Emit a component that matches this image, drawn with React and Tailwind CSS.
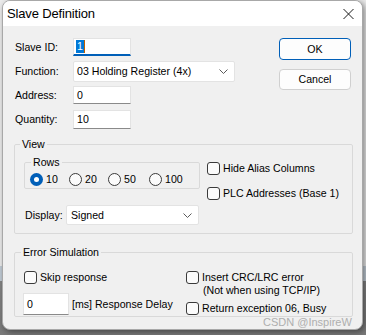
import React from "react";

// Small Win11-style controls
const Check = () => (
  <span className="w-[13px] h-[13px] shrink-0 rounded-[3px] border border-[#3a3a3a] bg-[#fbfbfb]" />
);

const Radio = ({ checked }) =>
  checked ? (
    <span className="w-[13px] h-[13px] shrink-0 rounded-full bg-[#005fb8] flex items-center justify-center">
      <span className="w-[5px] h-[5px] rounded-full bg-white" />
    </span>
  ) : (
    <span className="w-[13px] h-[13px] shrink-0 rounded-full border border-[#3a3a3a] bg-[#fbfbfb]" />
  );

const Chevron = () => (
  <svg width="9" height="5" viewBox="0 0 9 5" className="shrink-0">
    <path d="M0.5 0.5 L4.5 4.5 L8.5 0.5" fill="none" stroke="#5a5a5a" strokeWidth="1" />
  </svg>
);

const TextBox = ({ value, w = "w-[58px]", h = "h-[18px]" }) => (
  <div
    className={`${w} ${h} bg-white border border-[#e3e3e3] border-b-[#8a8a8a] flex items-center pl-[3px]`}
  >
    {value}
  </div>
);

const App = () => {
  return (
    <div className="w-[366px] h-[335px] overflow-hidden relative bg-[linear-gradient(to_bottom,#ececec_0px,#ececec_266px,#c2ccd6_266px,#c2ccd6_281px,#858585_281px,#7a7a7a_335px)] font-['Liberation_Sans',Arial,sans-serif] text-[10.6px] text-black leading-[13px]">
      {/* dialog window */}
      <div className="ml-[2px] w-[361px] h-[330px] rounded-[8px] border border-[#a8a8a8] bg-[#f0f0f0] overflow-hidden shadow-[2px_2px_6px_rgba(0,0,0,0.45)]">
        {/* title bar */}
        <div className="h-[25px] bg-white flex items-center justify-between pl-[4px] pr-[8px]">
          <span className="text-[13px] leading-[16px] tracking-[-0.15px]">Slave Definition</span>
          <svg width="11" height="10" viewBox="0 0 11 10">
            <path d="M0.5 0 L10.5 10 M10.5 0 L0.5 10" stroke="#1a1a1a" strokeWidth="1" />
          </svg>
        </div>

        {/* top fields + buttons */}
        <div className="flex mt-[12px]">
          <div className="flex flex-col pl-[12px]">
            <div className="flex items-center h-[18px]">
              <span className="w-[58px]">Slave ID:</span>
              <div className="w-[58px] h-[18px] bg-white border border-[#e3e3e3] border-b-2 border-b-[#005fb8] flex items-center pl-[2px]">
                <span className="bg-[#0078d7] text-white px-[1px] leading-[13px] border-r border-r-[#c06000]">1</span>
              </div>
            </div>
            <div className="flex items-center h-[21px] mt-[5px]">
              <span className="w-[58px]">Function:</span>
              <div className="w-[162px] h-[21px] bg-white border border-[#e3e3e3] rounded-[2px] flex items-center justify-between pl-[3px] pr-[6px]">
                <span>03 Holding Register (4x)</span>
                <Chevron />
              </div>
            </div>
            <div className="flex items-center h-[18px] mt-[4px]">
              <span className="w-[58px]">Address:</span>
              <TextBox value="0" />
            </div>
            <div className="flex items-center h-[19px] mt-[6px]">
              <span className="w-[58px]">Quantity:</span>
              <TextBox value="10" h="h-[19px]" />
            </div>
          </div>

          <div className="ml-auto mr-[11px] flex flex-col gap-[9px]">
            <button className="w-[72px] h-[22px] rounded-[4px] bg-[#fdfdfd] border-[1.5px] border-[#005fb8] flex items-center justify-center">
              OK
            </button>
            <button className="w-[72px] h-[21px] rounded-[4px] bg-[#fdfdfd] border border-[#d0d0d0] flex items-center justify-center">
              Cancel
            </button>
          </div>
        </div>

        {/* View group */}
        <fieldset className="ml-[11px] w-[339px] mt-[8px] border border-[#d9d9d9] rounded-[2px]">
          <legend className="ml-[5px] px-[2px] leading-[14px]">View</legend>
          <div className="flex">
            <div className="flex flex-col">
              <fieldset className="ml-[9px] w-[176px] mt-[4px] border border-[#d9d9d9] rounded-[2px]">
                <legend className="ml-[6px] px-[2px] leading-[14px]">Rows</legend>
                <div className="flex items-center h-[13px] mt-[4px] mb-[2px] pl-[5px]">
                  <div className="flex items-center gap-[3px] w-[39px]">
                    <Radio checked />
                    <span>10</span>
                  </div>
                  <div className="flex items-center gap-[3px] w-[39px]">
                    <Radio />
                    <span>20</span>
                  </div>
                  <div className="flex items-center gap-[3px] w-[41px]">
                    <Radio />
                    <span>50</span>
                  </div>
                  <div className="flex items-center gap-[3px]">
                    <Radio />
                    <span>100</span>
                  </div>
                </div>
              </fieldset>
              <div className="flex items-center h-[20px] mt-[16px] mb-[8px] pl-[10px]">
                <span className="w-[41px]">Display:</span>
                <div className="w-[133px] h-[20px] bg-white border border-[#e3e3e3] rounded-[2px] flex items-center justify-between pl-[4px] pr-[6px]">
                  <span>Signed</span>
                  <Chevron />
                </div>
              </div>
            </div>
            <div className="flex flex-col ml-[7px] mt-[11px] gap-[12px]">
              <div className="flex items-center gap-[3px]">
                <Check />
                <span>Hide Alias Columns</span>
              </div>
              <div className="flex items-center gap-[3px]">
                <Check />
                <span>PLC Addresses (Base 1)</span>
              </div>
            </div>
          </div>
        </fieldset>

        {/* Error Simulation group */}
        <fieldset className="ml-[11px] w-[339px] mt-[11px] border border-[#d9d9d9] rounded-[2px]">
          <legend className="ml-[6px] px-[2px] leading-[14px]">Error Simulation</legend>
          <div className="flex mt-[12px] pl-[8px]">
            <div className="flex flex-col w-[163px]">
              <div className="flex items-center gap-[3px] ml-[1px] h-[13px]">
                <Check />
                <span>Skip response</span>
              </div>
              <div className="flex items-center gap-[3px] mt-[9px] mb-[1px]">
                <TextBox value="0" w="w-[46px]" h="h-[22px]" />
                <span>[ms] Response Delay</span>
              </div>
            </div>
            <div className="flex flex-col">
              <div className="flex items-start gap-[3px]">
                <Check />
                <span className="leading-[13px]">
                  Insert CRC/LRC error
                  <br />
                  <span className="pl-[1px]">(Not when using TCP/IP)</span>
                </span>
              </div>
              <div className="flex items-center gap-[3px] mt-[5px]">
                <Check />
                <span>Return exception 06, Busy</span>
              </div>
            </div>
          </div>
        </fieldset>
      </div>

      {/* CSDN watermark overlay */}
      <span className="absolute left-[263px] top-[315px] text-[11px] leading-[14px] text-[#a8a8a8] opacity-90">
        CSDN @InspireW
      </span>
    </div>
  );
};

export default App;
